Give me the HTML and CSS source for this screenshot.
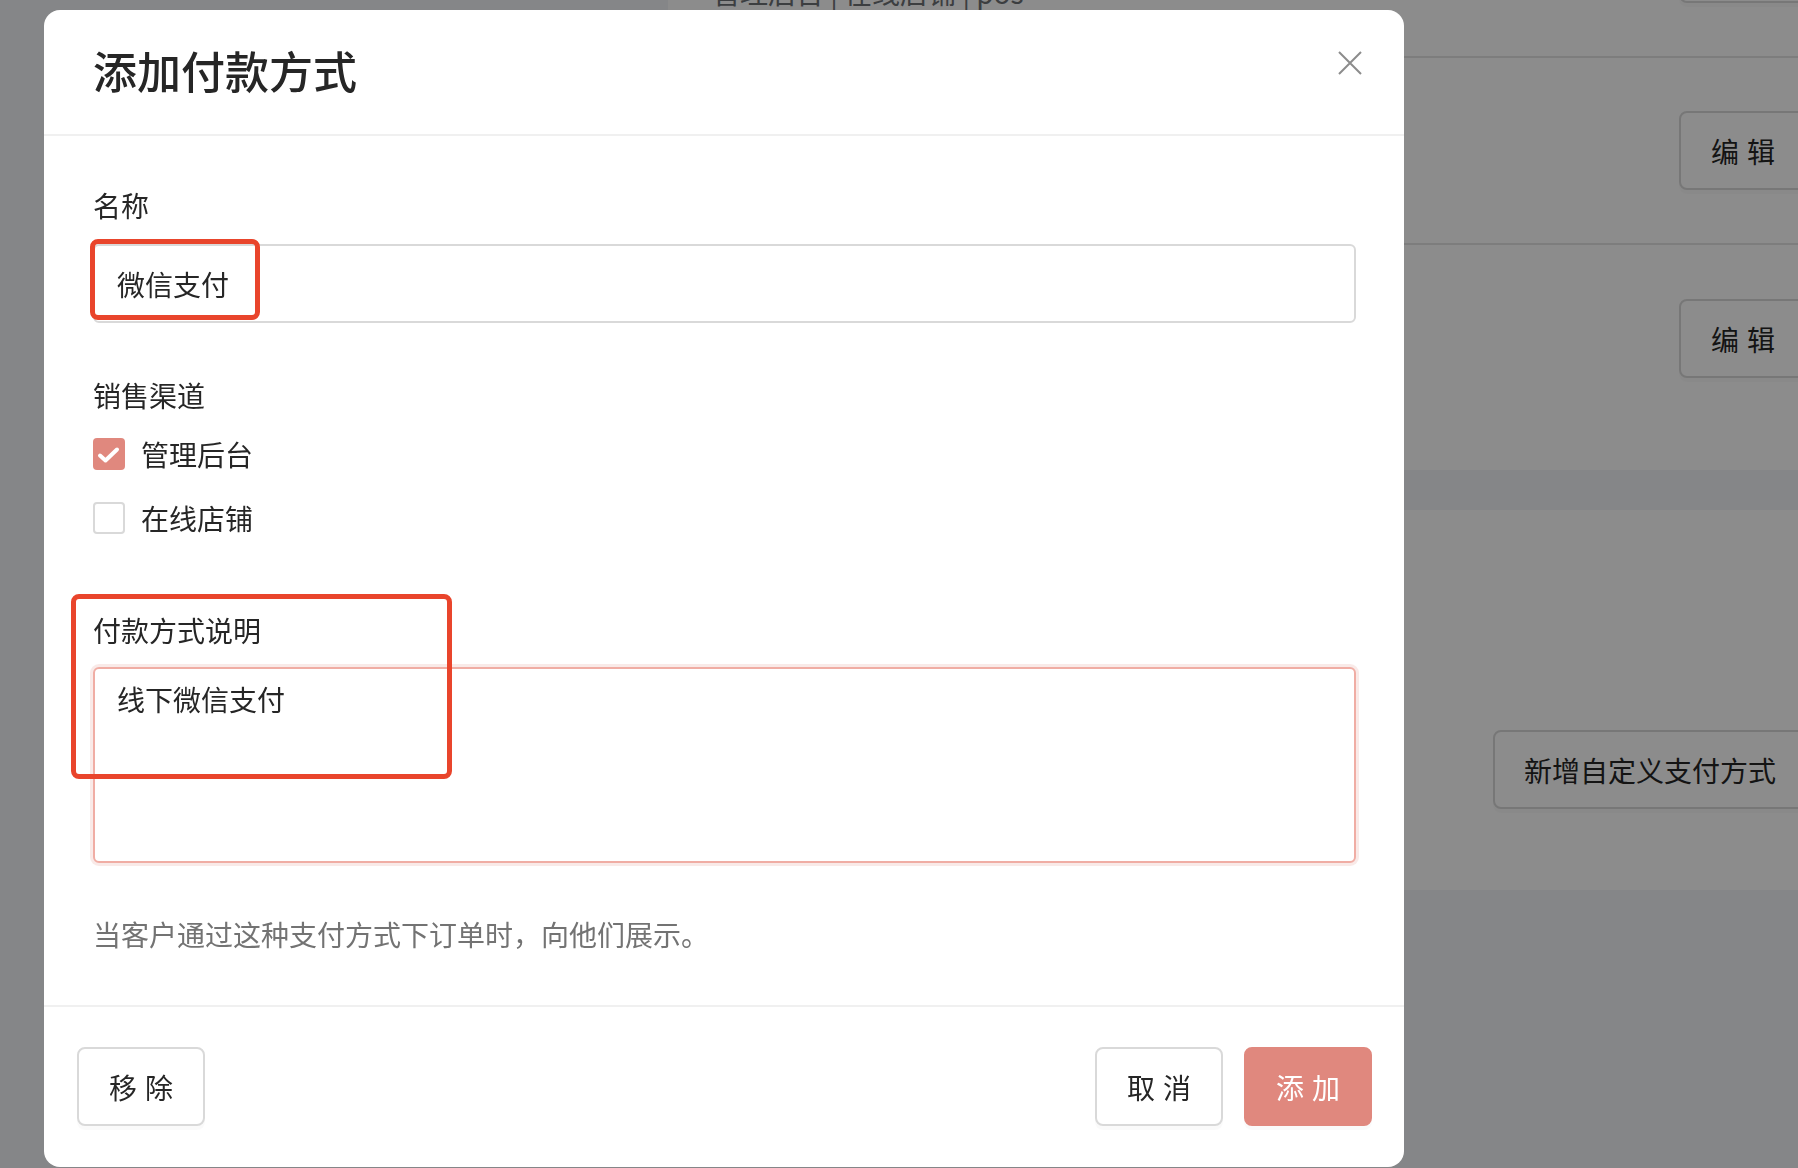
FILE: index.html
```html
<!DOCTYPE html>
<html lang="zh-CN">
<head>
    <meta charset="UTF-8">
    <meta name="viewport" content="width=device-width, initial-scale=1.0">
    <title>添加付款方式</title>
    <link rel="stylesheet" href="styles.css">
</head>
<body>
    <div class="page">
        <section class="card">
            <div class="row">
                <div class="row-info">
                    <div class="row-title">货到付款</div>
                    <div class="row-sub">管理后台 | 在线店铺 | pos</div>
                </div>
                <button class="btn"><span class="pair">编辑</span></button>
            </div>
            <div class="row">
                <div class="row-info">
                    <div class="row-title">银行转账</div>
                    <div class="row-sub">管理后台 | 在线店铺</div>
                </div>
                <button class="btn"><span class="pair">编辑</span></button>
            </div>
            <div class="row row-last">
                <div class="row-info">
                    <div class="row-title">现金</div>
                    <div class="row-sub">pos</div>
                </div>
                <button class="btn"><span class="pair">编辑</span></button>
            </div>
        </section>

        <section class="card card-custom">
            <div class="custom-head">自定义支付方式</div>
            <div class="custom-actions">
                <button class="btn btn-plain">新增自定义支付方式</button>
            </div>
        </section>
    </div>

    <div class="mask"></div>

    <div class="modal">
        <div class="modal-head">
            <h2 class="modal-title">添加付款方式</h2>
            <button class="close" aria-label="关闭">
                <svg width="24" height="24" viewBox="0 0 24 24">
                    <path d="M1 1 L23 23 M23 1 L1 23" stroke="#8c8c8c" stroke-width="2" fill="none"/>
                </svg>
            </button>
        </div>

        <div class="modal-body">
            <div class="field">
                <label class="label">名称</label>
                <div class="marked">
                    <input class="input" type="text" value="微信支付">
                    <span class="mark mark-name"></span>
                </div>
            </div>

            <div class="field field-channels">
                <label class="label">销售渠道</label>
                <div class="checks">
                    <label class="check">
                        <span class="box box-on">
                            <svg width="32" height="32" viewBox="0 0 32 32">
                                <path d="M7 17.5 L12.5 22.5 L24 11.5" stroke="#fff" stroke-width="4" fill="none" stroke-linecap="round" stroke-linejoin="round"/>
                            </svg>
                        </span>
                        管理后台
                    </label>
                    <label class="check">
                        <span class="box"></span>
                        在线店铺
                    </label>
                </div>
            </div>

            <div class="field field-desc">
                <label class="label">付款方式说明</label>
                <textarea class="textarea">线下微信支付</textarea>
                <span class="mark mark-desc"></span>
            </div>

            <p class="help">当客户通过这种支付方式下订单时，向他们展示。</p>
        </div>

        <div class="modal-foot">
            <button class="btn"><span class="pair">移除</span></button>
            <button class="btn btn-cancel"><span class="pair">取消</span></button>
            <button class="btn btn-primary"><span class="pair">添加</span></button>
        </div>
    </div>
</body>
</html>
```

FILE: styles.css
```css
body {
    margin: 0;
    overflow: hidden;
    height: 1168px;
    font-family: "Noto Sans CJK SC", "Noto Sans", sans-serif;
    font-size: 28px;
    color: #262626;
    background-color: #f2f4f7;
}

/* page behind the dialog */
.page {
    width: 1860px;
}

.card {
    width: 1172px;
    margin-left: 668px;
    background-color: #fff;
    box-sizing: border-box;
}

.card:first-child {
    margin-top: -129px;
    padding-bottom: 38px;
}

.row {
    height: 187px;
    box-sizing: border-box;
    display: flex;
    align-items: center;
    justify-content: space-between;
    padding: 0 33px 0 44px;
    border-bottom: 2px solid #e3e3e3;
}

.row-last {
    border-bottom: none;
}

.row-info {
    align-self: flex-start;
    padding-top: 61px;
}

.row-title,
.row-sub {
    line-height: 40px;
}

.row-sub {
    color: #6d7175;
}

.card-custom {
    margin-top: 40px;
    height: 380px;
    padding: 60px 33px 0 44px;
}

.custom-head {
    line-height: 40px;
    font-weight: 500;
}

.custom-actions {
    display: flex;
    justify-content: flex-end;
    margin-top: 120px;
}

.btn {
    height: 79px;
    padding: 0 30px;
    border: 2px solid #d9d9d9;
    border-radius: 8px;
    background-color: #fff;
    font-family: inherit;
    font-size: 28px;
    color: #262626;
    white-space: nowrap;
    box-shadow: 0 4px 0 rgba(0, 0, 0, 0.02);
    cursor: pointer;
}

.btn-plain {
    padding: 0 29px;
}

.pair {
    letter-spacing: 8px;
    margin-right: -8px;
}

.mask {
    position: fixed;
    inset: 0;
    background-color: rgba(0, 0, 0, 0.45);
}

/* dialog */
.modal {
    position: fixed;
    left: 44px;
    top: 10px;
    width: 1360px;
    height: 1157px;
    background-color: #fff;
    border-radius: 16px;
    overflow: hidden;
    display: flex;
    flex-direction: column;
}

.modal-head {
    height: 124px;
    display: flex;
    align-items: center;
    justify-content: space-between;
    padding: 0 42px 0 49px;
    border-bottom: 2px solid #f0f0f0;
}

.modal-title {
    margin: 0;
    padding-bottom: 4px;
    font-size: 44px;
    font-weight: 500;
    line-height: 66px;
}

.close {
    align-self: flex-start;
    margin-top: 41px;
    border: none;
    background: none;
    padding: 0;
    width: 24px;
    height: 24px;
    display: flex;
    cursor: pointer;
}

.modal-body {
    padding: 49px 48px 51px 49px;
}

.field {
    position: relative;
}

.label {
    display: block;
    line-height: 40px;
}

.marked {
    position: relative;
    margin-top: 19px;
}

.input {
    display: block;
    width: 100%;
    height: 79px;
    box-sizing: border-box;
    padding: 0 22px;
    border: 2px solid #d9d9d9;
    border-radius: 6px;
    font-family: inherit;
    font-size: 28px;
    color: #262626;
    outline: none;
}

/* red annotation boxes */
.mark {
    position: absolute;
    border: 5px solid #e9452c;
    border-radius: 8px;
    box-sizing: border-box;
    pointer-events: none;
}

.mark-name {
    left: -3px;
    top: -5px;
    width: 170px;
    height: 81px;
}

.mark-desc {
    left: -22px;
    top: -16px;
    width: 381px;
    height: 185px;
}

.field-channels {
    margin-top: 52px;
}

.checks {
    display: flex;
    flex-direction: column;
    gap: 24px;
    margin-top: 19px;
}

.check {
    display: flex;
    align-items: center;
    gap: 16px;
    height: 40px;
    line-height: 40px;
}

.box {
    width: 32px;
    height: 32px;
    box-sizing: border-box;
    border: 2px solid #d9d9d9;
    border-radius: 4px;
    display: flex;
    align-items: center;
    justify-content: center;
}

.box-on {
    border: none;
    background-color: #e0887e;
}

.field-desc {
    margin-top: 72px;
}

.textarea {
    display: block;
    width: 100%;
    height: 196px;
    margin-top: 17px;
    box-sizing: border-box;
    padding: 10px 22px;
    border: 2px solid #f0ada4;
    border-radius: 6px;
    box-shadow: 0 0 0 3px rgba(224, 136, 126, 0.18);
    font-family: inherit;
    font-size: 28px;
    line-height: 40px;
    color: #262626;
    resize: none;
    outline: none;
}

.help {
    margin: 51px 0 0;
    line-height: 40px;
    color: #737373;
}

.modal-foot {
    display: flex;
    gap: 21px;
    padding: 40px 32px 0 33px;
    border-top: 2px solid #f0f0f0;
}

.btn-cancel {
    margin-left: auto;
}

.btn-primary {
    background-color: #e0887e;
    border-color: #e0887e;
    color: #fff;
}
```
